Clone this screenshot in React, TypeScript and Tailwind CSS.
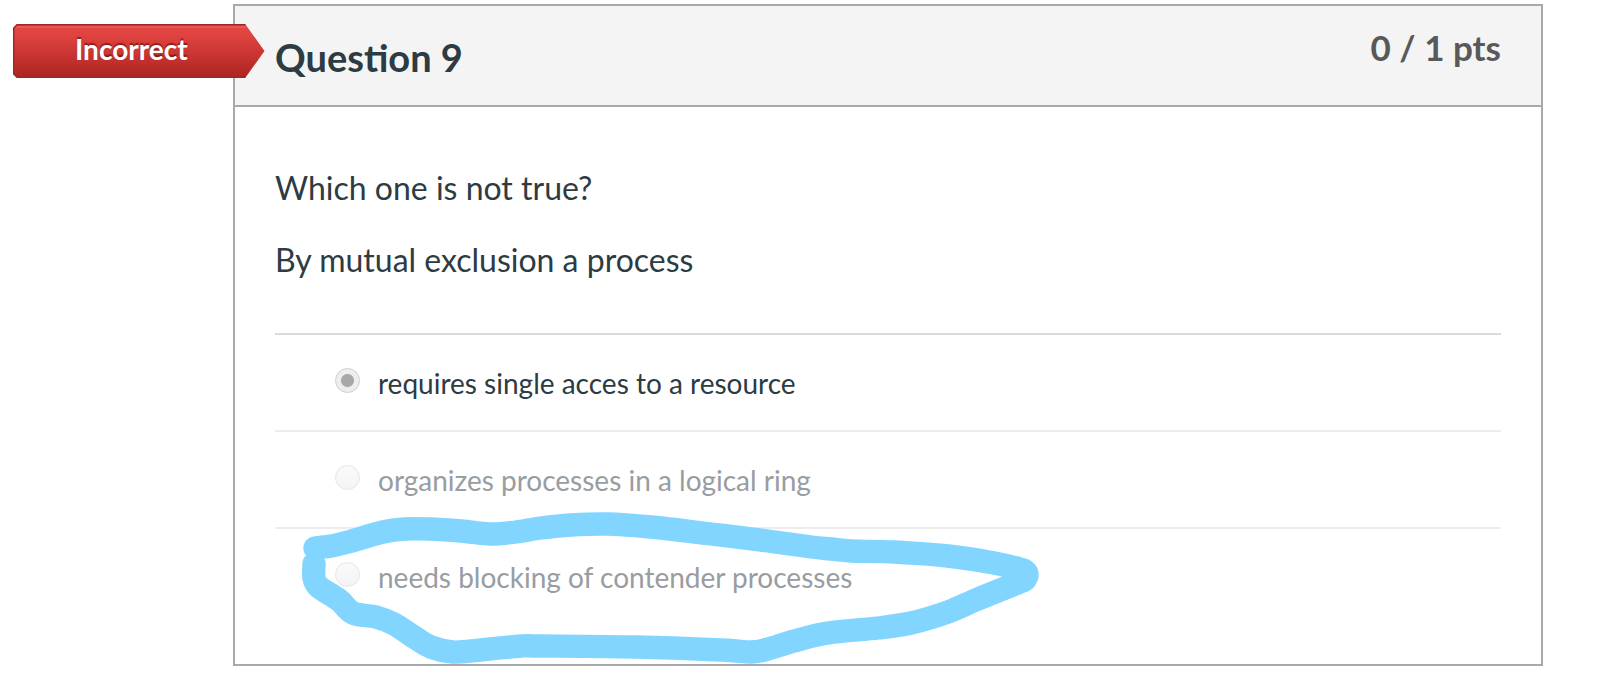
type Point = [number, number];

const answers = [
  { id: "a1", text: "requires single acces to a resource", selected: true, circled: false },
  { id: "a2", text: "organizes processes in a logical ring", selected: false, circled: false },
  { id: "a3", text: "needs blocking of contender processes", selected: false, circled: true },
];

const strokePoints: Point[] = [
  [14, 38], [30, 36], [47, 32], [82, 22], [103, 19], [128, 19], [160, 21], [190, 24],
  [215, 22], [240, 18], [270, 15], [305, 14], [350, 17], [410, 24], [467, 31], [510, 37],
  [530, 39], [550, 41], [593, 42], [647, 46], [693, 53], [719, 59], [724, 61], [726, 65],
  [724, 69], [719, 72], [677, 89], [647, 102], [610, 113], [577, 118], [527, 123], [493, 131],
  [467, 139], [450, 142], [420, 140], [335, 137], [240, 136], [220, 136],
  [180, 140], [152, 142], [130, 137], [113, 127], [93, 114], [75, 107],
  [52, 103], [38, 90], [18, 77], [13, 68], [13, 54],
];

/** Catmull-Rom spline through the points, written as cubic curves. */
function smoothPath(points: Point[]): string {
  let d = `M${points[0][0]} ${points[0][1]}`;
  for (let i = 0; i < points.length - 1; i++) {
    const p0 = points[Math.max(i - 1, 0)];
    const p1 = points[i];
    const p2 = points[i + 1];
    const p3 = points[Math.min(i + 2, points.length - 1)];
    d += ` C${p1[0] + (p2[0] - p0[0]) / 6} ${p1[1] + (p2[1] - p0[1]) / 6} ${p2[0] - (p3[0] - p1[0]) / 6} ${p2[1] - (p3[1] - p1[1]) / 6} ${p2[0]} ${p2[1]}`;
  }
  return d;
}

function MarkerStroke() {
  return (
    <svg
      aria-hidden="true"
      className="pointer-events-none absolute -top-[22px] left-6 h-[160px] w-[744px]"
      viewBox="-2 -3 744 160"
      fill="none"
    >
      <path d={smoothPath(strokePoints)} stroke="#82d5ff" strokeWidth="23.4" strokeLinecap="round" strokeLinejoin="round" />
    </svg>
  );
}

function IncorrectBadge() {
  return (
    <div className="absolute top-[18px] -left-[222px] flex h-[54px] w-[252px] items-center pb-1 pl-[62px]">
      <svg aria-hidden="true" className="absolute inset-0 h-full w-full" viewBox="0 0 252 54">
        <defs>
          <linearGradient id="badge" x1="0" y1="0" x2="0" y2="1">
            <stop offset="0" stopColor="#e64643" />
            <stop offset="0.2" stopColor="#e04340" />
            <stop offset="1" stopColor="#ad2420" />
          </linearGradient>
        </defs>
        <path d="M4 0.500H232.500L251.500 27L232.500 53.500H4L0.500 50V4Z" fill="url(#badge)" />
        <path d="M3 3H232" stroke="#ee6a65" strokeWidth="2" opacity="0.5" />
        <path d="M232.500 53.300H4L0.700 50V4L4 0.700H232.500" fill="none" stroke="#9c2825" strokeWidth="1.400" />
      </svg>
      <span className="relative text-[28px] leading-8 font-bold text-white [text-shadow:0_-2px_1px_rgba(70,0,0,0.5)]">
        Incorrect
      </span>
    </div>
  );
}

export default function App() {
  return (
    <main className="bg-white pt-1 pr-[57px] pb-8 pl-[233px] font-['Lato',sans-serif] text-[#2d3b42]">
      <section className="relative border-2 border-[#a9a9a9]">
        <IncorrectBadge />
        <header className="flex items-start justify-between border-b-2 border-[#a9a9a9] bg-[#f4f4f4] px-10 pt-5 pb-6">
          <h1 className="mt-2 mb-px text-[38px] leading-[46px] font-bold">Question 9</h1>
          <p className="text-[35px] leading-[42px] font-bold text-[#595959]">0 / 1 pts</p>
        </header>
        <div className="px-10 pt-[57px] pb-10">
          <div className="flex flex-col gap-6 text-[32px] leading-[48px]">
            <p>Which one is not true?</p>
            <p>By mutual exclusion a process</p>
          </div>
          <div role="radiogroup" aria-label="Answers" className="mt-[49px]">
            {answers.map((answer, index) => (
              <div
                key={answer.id}
                className={
                  index === 0
                    ? "relative flex h-[97px] items-center gap-[18px] border-t-2 border-[#dbdbdb] pl-[60px]"
                    : "relative flex h-[97px] items-center gap-[18px] border-t-2 border-[#ededed] pl-[60px]"
                }
              >
                <input
                  id={answer.id}
                  type="radio"
                  name="answer"
                  disabled
                  defaultChecked={answer.selected}
                  className={
                    answer.selected
                      ? "mb-1 size-[25px] shrink-0 appearance-none rounded-full border border-[#cfcfcf] bg-[radial-gradient(circle,#a8a8a8_6px,#eeeeee_7px)]"
                      : "mb-1 size-[25px] shrink-0 appearance-none rounded-full border border-[#e6e6e6] bg-linear-to-b from-[#fafafa] to-[#f4f4f4]"
                  }
                />
                <label
                  htmlFor={answer.id}
                  className={
                    answer.selected
                      ? "text-[28px] leading-10"
                      : "text-[28px] leading-10 text-[#989da2]"
                  }
                >
                  {answer.text}
                </label>
                {answer.circled && <MarkerStroke />}
              </div>
            ))}
          </div>
        </div>
      </section>
    </main>
  );
}
